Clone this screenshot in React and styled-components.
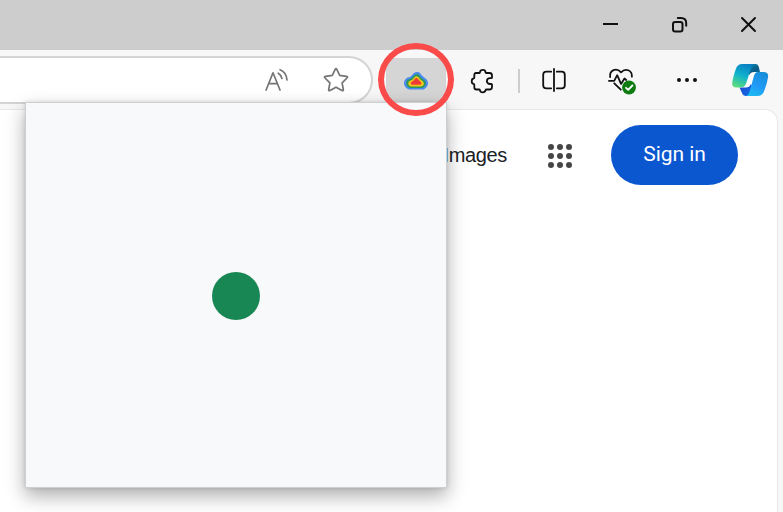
import React from "react";
import styled, { createGlobalStyle } from "styled-components";

const GlobalStyle = createGlobalStyle`
  *, *::before, *::after { box-sizing: border-box; }
  html, body { margin: 0; overflow: hidden; }
  svg { display: block; overflow: visible; }
  button { border: 0; padding: 0; margin: 0; background: none; }
`;

const Window = styled.div`
  position: relative;
  width: 783px;
  height: 512px;
  overflow: hidden;
  background: #f7f7f7;
  font-family: "Liberation Sans", Arial, sans-serif;
`;

const TitleBar = styled.header`
  display: grid;
  grid-template-columns: repeat(3, 69px);
  justify-content: end;
  height: 50px;
  background: #cdcdcd;
`;

const WindowButton = styled.button`
  display: flex;
  align-items: center;
  justify-content: center;
  height: 48px;
  padding-right: 1px;
`;

const Toolbar = styled.div`
  display: grid;
  grid-template-columns: 373px 73px 72px 2px 68px 68px 62px 65px;
  height: 59px;
  padding-top: 6px;
`;

const AddressBar = styled.div`
  display: flex;
  align-items: center;
  justify-content: flex-end;
  gap: 35px;
  height: 48px;
  padding-right: 22px;
  background: #fff;
  border: 2px solid #d4d4d4;
  border-left: 0;
  border-radius: 0 24px 24px 0;
`;

const ToolButton = styled.button`
  display: flex;
  align-items: center;
  justify-content: center;
  height: 48px;
`;

const ExtensionButton = styled(ToolButton)`
  height: 46px;
  margin: 2px 0 0 13px;
  padding-bottom: 1px;
  background: #d5d5d5;
  border-radius: 5px;
`;

const PuzzleButton = styled(ToolButton)`
  padding: 1px 0 0 2px;
`;

const Divider = styled.div`
  width: 2px;
  height: 24px;
  margin-top: 13px;
  background: #cdcdcd;
`;

const Page = styled.main`
  width: 778px;
  height: 403px;
  background: #fff;
  border: 1px solid #e8e8e8;
  border-left: 0;
  border-bottom: 0;
  border-radius: 0 13px 0 0;
`;

const PageNav = styled.nav`
  display: flex;
  align-items: center;
  justify-content: flex-end;
  padding: 15px 39px 0 0;
`;

const ImagesLink = styled.span`
  margin-right: 41px;
  font-size: 20px;
  line-height: 24px;
  letter-spacing: -0.35px;
  color: #202124;
`;

const AppsIcon = styled.svg`
  margin-top: 2px;
  fill: #444746;
`;

const SignInButton = styled.button`
  width: 127px;
  height: 60px;
  margin-left: 39px;
  padding-bottom: 2px;
  border-radius: 30px;
  background: #0b57d0;
  color: #fff;
  font: 400 21px/24px Roboto, sans-serif;
  letter-spacing: -0.05px;
`;

const Popup = styled.section`
  position: absolute;
  z-index: 2;
  left: 25px;
  top: 102px;
  display: flex;
  align-items: center;
  justify-content: center;
  width: 422px;
  height: 386px;
  padding-top: 2px;
  background: #f8f9fb;
  border: 1px solid #cecfd0;
  box-shadow: 0 8px 18px rgba(0, 0, 0, 0.32), 0 0 4px rgba(0, 0, 0, 0.12);
`;

const LoadingDot = styled.div`
  width: 48px;
  height: 48px;
  border-radius: 50%;
  background: #198754;
`;

const HighlightRing = styled.div`
  position: absolute;
  z-index: 3;
  left: 378px;
  top: 43px;
  width: 76px;
  height: 73px;
  border: 6px solid #f84b4a;
  border-radius: 50%;
`;

const LineIcon = styled.svg`
  fill: none;
  stroke: ${({ $color }) => $color || "#111"};
  stroke-width: ${({ $weight }) => $weight || 1.7};
  stroke-linecap: ${({ $cap }) => $cap || "round"};
  stroke-linejoin: round;
`;

const Minimize = () => (
  <LineIcon width="16" height="16" $weight={2} $cap="butt">
    <path d="M1 8H16" />
  </LineIcon>
);

const Restore = () => (
  <LineIcon width="16" height="16" $weight={2}>
    <rect x="2" y="6" width="9.5" height="9.5" rx="2.2" />
    <path d="M6.8 2H10C13.2 2 15.2 4 15.2 7V9.8" />
  </LineIcon>
);

const Close = () => (
  <LineIcon width="16" height="16" $weight={2}>
    <path d="M2 2L15 15M15 2L2 15" />
  </LineIcon>
);

const ReadAloud = () => (
  <LineIcon width="24" height="24" $color="#747474" $weight={1.7}>
    <path d="M2.1 22L9 4.8L16 22M4.7 15.6H13.3" />
    <path d="M14.3 5.2C16.3 6.4 17.5 8.2 17.9 10.5M16.1 1.7C20 3.2 22.6 7 23 12" />
  </LineIcon>
);

const Star = () => (
  <LineIcon width="26" height="26" $color="#747474" $weight={1.7}>
    <path d="M12.2 2.3Q13 .7 13.8 2.3L16.7 8.4L23.5 9.4Q25.2 9.8 24 11L19.1 15.8L20.3 22.5Q20.5 24.2 19 23.5L13 20.2L7 23.5Q5.5 24.2 5.7 22.5L6.9 15.8L2 11Q.8 9.8 2.5 9.4L9.3 8.4Z" />
  </LineIcon>
);

const HeatCloud = () => (
  <svg width="24" height="18" viewBox="0 0 24 18">
    <path fill="#4a8af0" d="M5.5 17.6C3 17.3 0 14.2 0 11.3C0 8.5 1.8 5.8 4.8 5.3C7 5 8 3 9.7 1.3C11.5-.3 14.8-.3 16.4 1.5C17.8 3.2 18.5 4.3 20.3 5.5C22.6 7 24 8.8 24 11.2C24 14.2 21 17.4 18.5 17.6Z" />
    <path fill="#299958" d="M6.5 16C4.2 15.8 2.2 13.6 2.2 11.3C2.3 8.8 3.8 7.3 6 6.8C8.1 6.4 8.8 4.2 10.6 2.9C12.3 2 14.4 2.2 15.5 3.8C16.7 5.7 18 6.4 19.4 7.4C21.2 8.7 22 9.7 21.8 11.5C21.5 13.9 19.8 15.8 17.7 16Z" />
    <path fill="#f6c51b" d="M7.8 14.5C5.3 14.3 4 12.9 4.3 11C4.6 9 6.3 8.5 7.8 8C9.7 7.3 10 4.7 11.9 4.3C13.4 4 14.4 4.8 15.1 6C16 7.7 17.5 8 18.8 9.2C21 11.5 19.5 14.3 16.6 14.5Z" />
    <path fill="#ed3c35" d="M8.6 12.8C6.3 12.6 6.2 10.2 8.4 9.4C10.3 8.6 10.5 6 12.3 6C14.1 6 14.4 8.4 16 9.2C18.1 10.4 17.5 12.7 15.5 12.8Z" />
  </svg>
);

const Puzzle = () => (
  <LineIcon width="24" height="24" $weight={1.8}>
    <path d="M5 4H8.2C8.7 4 9 3.7 9 3.2C9 1.6 10.3.9 11.7.9S14.5 1.7 14.5 3.2C14.5 3.7 14.8 4 15.3 4H18.5Q21 4 21 6.5V8.4Q21 9.2 20.2 9.2H19.1C14.8 9.2 14.8 15 19.1 15H20.2Q21 15 21 15.8V18Q21 20.5 18.5 20.5H15.7Q14.7 20.5 14.5 21.3C14.2 22.8 13.1 23.3 11.7 23.3S9.2 22.7 9 21.3Q8.8 20.5 8 20.5H5.5Q3.3 20.5 3.3 18.2V15.7Q3.3 14.9 2.6 14.9C.1 14.5.1 9.9 2.6 9.5Q3.3 9.3 3.3 8.6V6Q3.3 4 5 4Z" />
  </LineIcon>
);

const SplitScreen = () => (
  <LineIcon width="24" height="24" $weight={1.8}>
    <path d="M9.2 3.7H4.4Q1.2 3.7 1.2 6.9V17.2Q1.2 20.3 4.4 20.3H9.2M14.8 3.7H19.6Q22.8 3.7 22.8 6.9V17.2Q22.8 20.3 19.6 20.3H14.8M12 1V23" />
  </LineIcon>
);

const Health = () => (
  <LineIcon width="28" height="26" $weight={1.8}>
    <path d="M2.1 10.2C1.2 2.9 8.5.4 13 5.3C17.5.5 24.3 3.2 23.9 9.7M1 13.9H6.2L9.2 8.2L13 16.9L16.5 11.5L18.2 13M6.3 16.3L12.8 22.7" />
    <circle cx="21" cy="20.5" r="6.9" fill="#107c10" stroke="none" />
    <path stroke="#fff" d="M18 20.8L20.2 22.8L24.4 18.5" />
  </LineIcon>
);

const Copilot = () => (
  <svg width="38" height="34" viewBox="1 0 38 34">
    <defs>
      <linearGradient id="leftWing" x1=".65" y1="0" x2=".25" y2="1">
        <stop stopColor="#087fc4" />
        <stop offset=".5" stopColor="#10b2cd" />
        <stop offset="1" stopColor="#5ddd7b" />
      </linearGradient>
      <linearGradient id="rightWing" x1=".7" y1="0" x2=".3" y2="1">
        <stop stopColor="#168ed8" />
        <stop offset=".55" stopColor="#2299f6" />
        <stop offset="1" stopColor="#1bb9f2" />
      </linearGradient>
      <linearGradient id="topFold" x1="0" y1="0" x2="1" y2="1">
        <stop stopColor="#079ac1" />
        <stop offset=".65" stopColor="#095b86" />
        <stop offset="1" stopColor="#1176b3" />
      </linearGradient>
      <linearGradient id="bottomFold" x1="0" y1="0" x2="1" y2="1">
        <stop stopColor="#2247cf" />
        <stop offset="1" stopColor="#0c70e6" />
      </linearGradient>
    </defs>
    <path fill="#fff" d="M17 8H26L21 26H13Z" />
    <path fill="url(#topFold)" d="M12 1H24.5Q27 1 27.8 4L29 9H23.5Q19.5 9 18.2 12L17 9Z" />
    <path fill="url(#bottomFold)" d="M8.5 24.5H15Q18.5 24.5 19.8 21L22 25L18 33H15Q12 33 11 30Z" />
    <path fill="url(#leftWing)" d="M11 1H24Q21.3 1.3 20.2 4.5L15.3 20Q13.8 24.5 9.2 24.5H5.6Q.6 24.5 1.2 19.7Q2 14 5 5.5Q6.7 1 11 1Z" />
    <path fill="url(#rightWing)" d="M27 9H32.5Q37.7 9 37.1 14Q36 21 33.2 28Q31.2 33 26.5 33H15Q17.2 32.5 18.3 29.5L22.9 13Q24 9 27 9Z" />
  </svg>
);

const dotPositions = [3, 12, 21];

export default function App() {
  return (
    <Window>
      <GlobalStyle />
      <TitleBar>
        <WindowButton aria-label="Minimize"><Minimize /></WindowButton>
        <WindowButton aria-label="Restore"><Restore /></WindowButton>
        <WindowButton aria-label="Close"><Close /></WindowButton>
      </TitleBar>
      <Toolbar>
        <AddressBar><ReadAloud /><Star /></AddressBar>
        <ExtensionButton aria-label="Extension"><HeatCloud /></ExtensionButton>
        <PuzzleButton aria-label="Extensions"><Puzzle /></PuzzleButton>
        <Divider />
        <ToolButton aria-label="Split screen"><SplitScreen /></ToolButton>
        <ToolButton aria-label="Browser essentials"><Health /></ToolButton>
        <ToolButton aria-label="More">
          <svg width="22" height="8" fill="#111">
            <circle cx="3" cy="4" r="2" />
            <circle cx="11" cy="4" r="2" />
            <circle cx="19" cy="4" r="2" />
          </svg>
        </ToolButton>
        <ToolButton aria-label="Copilot"><Copilot /></ToolButton>
      </Toolbar>
      <Page>
        <PageNav>
          <ImagesLink>Images</ImagesLink>
          <AppsIcon width="24" height="24">
            {dotPositions.flatMap((y) =>
              dotPositions.map((x) => <circle key={`${x}-${y}`} cx={x} cy={y} r="3" />)
            )}
          </AppsIcon>
          <SignInButton>Sign in</SignInButton>
        </PageNav>
      </Page>
      <Popup><LoadingDot /></Popup>
      <HighlightRing />
    </Window>
  );
}
